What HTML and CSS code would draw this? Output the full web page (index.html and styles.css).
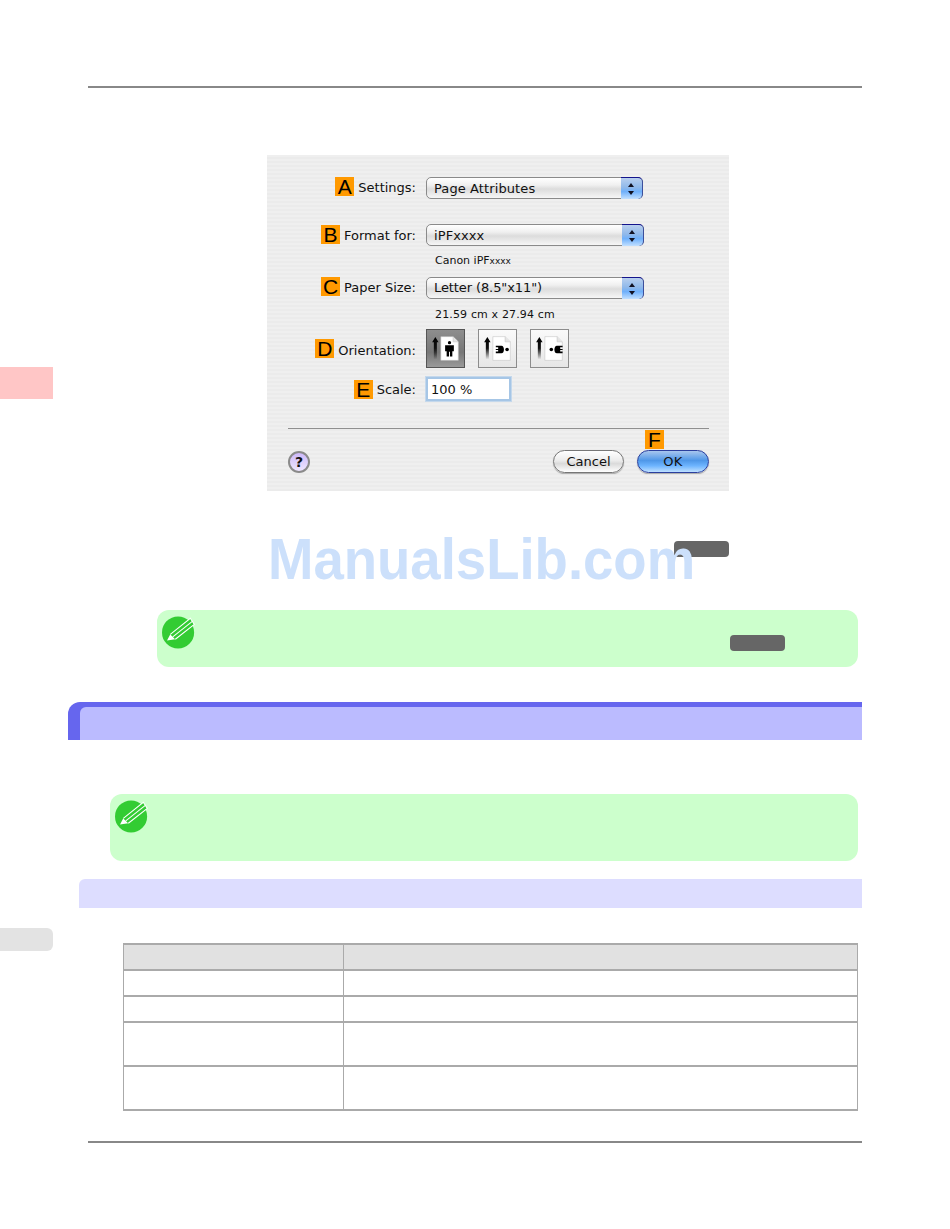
FILE: index.html
```html
<!DOCTYPE html>
<html lang="en">
<head>
  <meta charset="UTF-8">
  <title>Page Attributes</title>
  <link rel="stylesheet" href="styles.css">
</head>
<body>
  <div id="page">
    <!-- Side tabs -->
    <div id="sideTabs">
      <div class="tab tab-pink"></div>
      <div class="tab tab-grey"></div>
    </div>

    <div id="content">
      <div class="rule rule-top"></div>

      <!-- Page Attributes dialog -->
      <div id="dialog">
        <div class="row row-settings">
          <div class="label"><span class="badge">A</span>Settings:</div>
          <div class="select select-short"><span class="select-text">Page Attributes</span><span class="stepper"><i class="up"></i><i class="down"></i></span></div>
        </div>
        <div class="row row-format">
          <div class="label"><span class="badge">B</span>Format for:</div>
          <div class="select"><span class="select-text">iPFxxxx</span><span class="stepper"><i class="up"></i><i class="down"></i></span></div>
        </div>
        <p class="sub sub-printer">Canon iPF<span class="small-x">xxxx</span></p>
        <div class="row row-paper">
          <div class="label"><span class="badge">C</span>Paper Size:</div>
          <div class="select select-tight"><span class="select-text">Letter (8.5"x11")</span><span class="stepper"><i class="up"></i><i class="down"></i></span></div>
        </div>
        <p class="sub sub-paper">21.59 cm x 27.94 cm</p>
        <div class="row row-orientation">
          <div class="label"><span class="badge">D</span>Orientation:</div>
          <div class="orient-group">
            <svg class="orient orient-on" viewBox="0 0 39 39">
              <defs>
                <linearGradient id="arrowFade" x1="0" y1="0" x2="0" y2="1">
                  <stop offset="0" stop-color="#000"/>
                  <stop offset="0.5" stop-color="#111"/>
                  <stop offset="1" stop-color="#000" stop-opacity="0"/>
                </linearGradient>
                <g id="sheet">
                  <path d="M8.8 7.5 L5.4 13 H7.2 V31 H10.4 V13 H12.2 Z" fill="url(#arrowFade)"/>
                  <path d="M14.6 7 H27.5 L33 12.5 V32 H14.6 Z" fill="#fff" stroke="#c4c4c4" stroke-width=".6"/>
                  <path d="M27.5 7 V12.5 H33" fill="#e4e4e4" stroke="#c4c4c4" stroke-width=".6"/>
                </g>
                <g id="personSide">
                  <path d="M-4.5 -4 H1.5 C5 -4 5 4 1.5 4 H-4.5 V2.2 H-2 V.6 H-4.5 V-.6 H-2 V-2.2 H-4.5 Z"/>
                  <circle cx="7.4" cy="0" r="1.9"/>
                </g>
              </defs>
              <use href="#sheet"/>
              <g transform="translate(23.7 20)">
                <circle cx="0" cy="-6.6" r="1.7"/>
                <path d="M-4.6 -4 H4.6 V2.4 H3 V8 H.5 V2.8 H-.5 V8 H-3 V2.4 H-4.6 Z"/>
              </g>
            </svg>
            <svg class="orient" viewBox="0 0 39 39">
              <use href="#sheet"/>
              <use href="#personSide" transform="translate(22.2 20.5)"/>
            </svg>
            <svg class="orient" viewBox="0 0 39 39">
              <use href="#sheet"/>
              <use href="#personSide" transform="translate(28.8 20.5) scale(-1 1)"/>
            </svg>
          </div>
        </div>
        <div class="row row-scale">
          <div class="label"><span class="badge">E</span>Scale:</div>
          <div class="scale-input">100 %</div>
        </div>
        <div class="dialog-sep"></div>
        <div class="dialog-foot">
          <div class="help">?</div>
          <div class="btn btn-cancel">Cancel</div>
          <div class="btn btn-ok"><span class="badge badge-f">F</span>OK</div>
        </div>
      </div>

      <div class="pill pill-ref"></div>

      <!-- Note 1 -->
      <div class="note note-first">
        <svg class="note-icon" viewBox="0 0 36 36">
          <use href="#noteGlyph"/>
        </svg>
        <div class="pill pill-note"></div>
      </div>

      <div class="heading-main"><div class="heading-main-inner"></div></div>

      <!-- Note 2 -->
      <div class="note note-second">
        <svg class="note-icon" viewBox="0 0 36 36">
          <defs>
            <g id="noteGlyph">
              <circle cx="17" cy="18.5" r="17" fill="#33cc33"/>
              <path d="M5.3 27 L8.8 20.5 L14.1 25.7 Z" fill="#fff"/>
              <path d="M8.8 20.5 L30 3.5 L34.2 9.9 L14.1 25.7" fill="#33cc33" stroke="#fff" stroke-width="1.1"/>
              <path d="M11.4 23.1 L32.1 6.7" stroke="#fff" stroke-width="1.1" fill="none"/>
            </g>
          </defs>
          <use href="#noteGlyph"/>
        </svg>
      </div>

      <div class="heading-sub"></div>

      <table id="specTable">
        <tr class="head"><td class="col-a"></td><td></td></tr>
        <tr class="single"><td></td><td></td></tr>
        <tr class="single"><td></td><td></td></tr>
        <tr class="double"><td></td><td></td></tr>
        <tr class="double"><td></td><td></td></tr>
      </table>

      <div class="rule rule-bottom"></div>
    </div>

    <div id="watermark">ManualsLib.com</div>
  </div>
</body>
</html>
```

FILE: styles.css
```css
body {
  margin: 0;
  background-color: white;
  font-family: "DejaVu Sans", sans-serif;
  color: #111;
}
#page {
  position: relative;
  display: flex;
  width: 950px;
  height: 1229px;
  overflow: hidden;
}

/* side tabs */
#sideTabs {
  width: 53px;
  flex-shrink: 0;
}
.tab-pink {
  margin-top: 367px;
  height: 32px;
  background: #ffc6c6;
}
.tab-grey {
  margin-top: 529px;
  height: 23px;
  background: #e3e3e3;
  border-radius: 0 6px 6px 0;
}

#content {
  flex: 1;
}
.rule {
  margin-left: 35px;
  width: 774px;
  height: 2px;
  background: #888;
}
.rule-top {
  margin-top: 86px;
}
.rule-bottom {
  margin-top: 30px;
}

/* dialog */
#dialog {
  box-sizing: border-box;
  margin: 67px 0 0 214px;
  width: 462px;
  height: 336px;
  padding-top: 22px;
  background: repeating-linear-gradient(#efefef 0 2px, #ebebeb 2px 4px);
  font-size: 13px;
}
.row {
  display: flex;
  align-items: center;
  height: 22px;
}
.row-format {
  margin-top: 25px;
}
.row-orientation {
  margin-top: 7px;
  height: 39px;
}
.row-scale {
  margin-top: 9px;
  height: 24px;
}
.label {
  display: flex;
  align-items: center;
  justify-content: flex-end;
  width: 149px;
  margin-right: 10px;
  white-space: nowrap;
}
.badge {
  display: inline-block;
  width: 19px;
  height: 19px;
  margin-right: 4px;
  background: #ff9900;
  color: black;
  font-family: "Liberation Sans", sans-serif;
  font-size: 21px;
  line-height: 20px;
  text-align: center;
}
.row-settings .label,
.row-paper .label {
  margin-bottom: 2px;
}
.row-settings .badge,
.row-paper .badge,
.row-format .badge {
  margin-bottom: 2px;
}
.row-orientation .label {
  margin-top: 4px;
}
.row-orientation .badge {
  margin-bottom: 4px;
}
.select {
  box-sizing: border-box;
  position: relative;
  width: 218px;
  height: 22px;
  border: 1px solid #8a8a8a;
  border-radius: 5px;
  background: linear-gradient(#fff 0%, #f0f0f0 35%, #dcdcdc 55%, #f6f6f6 100%);
  line-height: 22px;
  letter-spacing: .1px;
}
.select-short {
  width: 217px;
}
.select-tight {
  letter-spacing: -.1px;
  line-height: 20px;
}
.select-text {
  padding-left: 7px;
}
.stepper {
  position: absolute;
  top: -1px;
  right: -1px;
  bottom: -1px;
  width: 22px;
  border-radius: 0 5px 5px 0;
  border-top: 1px solid #14148c;
  border-right: 1px solid #3c4f9c;
  box-sizing: border-box;
  background: linear-gradient(#b8cfee 0%, #8fb8ea 45%, #6fb0fb 65%, #c2e0ff 100%);
}
.stepper i {
  position: absolute;
  left: 7px;
  border-left: 3px solid transparent;
  border-right: 3px solid transparent;
}
.stepper .up {
  top: 5px;
  border-bottom: 4px solid #112;
}
.stepper .down {
  top: 13px;
  border-top: 4px solid #112;
}
.sub {
  margin: 0 0 0 168px;
  font-size: 11px;
  line-height: 15px;
}
.small-x {
  font-size: 9px;
}
.sub-printer {
  margin-top: 7px;
  margin-bottom: 8px;
}
.sub-paper {
  margin-top: 8px;
  margin-bottom: 2px;
  letter-spacing: .15px;
}
.orient-group {
  display: flex;
  gap: 13px;
}
.orient {
  box-sizing: border-box;
  width: 39px;
  height: 39px;
  border: 1px solid #8c8c8c;
  background: linear-gradient(#fafafa, #e6e6e6);
}
.orient-on {
  border-color: #555;
  background: linear-gradient(#8e8e8e, #777 60%, #9a9a9a);
}
.scale-input {
  box-sizing: border-box;
  width: 85px;
  height: 24px;
  padding-left: 3px;
  background: white;
  border: 2px solid #a6c6e6;
  outline: 1px solid #c4d8ec;
  font-size: 13px;
  line-height: 21px;
}
.dialog-sep {
  margin: 27px 0 0 21px;
  width: 421px;
  height: 1px;
  background: #8f8f8f;
}
.dialog-foot {
  display: flex;
  align-items: center;
  margin: 21px 20px 0 21px;
}
.help {
  box-sizing: border-box;
  width: 22px;
  height: 22px;
  margin-right: auto;
  border: 2px solid #8a8a8a;
  border-radius: 50%;
  background: linear-gradient(#cdb8fa, #eee6ff);
  font-weight: bold;
  font-size: 14px;
  line-height: 18px;
  text-align: center;
}
.btn {
  box-sizing: border-box;
  position: relative;
  height: 23px;
  border-radius: 12px;
  line-height: 21px;
  text-align: center;
  box-shadow: 0 1px 1px #aaa;
}
.btn-cancel {
  width: 71px;
  margin-right: 13px;
  border: 1px solid #777;
  background: linear-gradient(#fff 0%, #ececec 45%, #dadada 60%, #fff 100%);
}
.btn-ok {
  width: 72px;
  border: 1px solid #2b3f9e;
  background: linear-gradient(#a8c6ee 0%, #4f97e8 45%, #6db4ff 70%, #bfe0ff 100%);
  letter-spacing: .4px;
}
.badge-f {
  position: absolute;
  left: 7px;
  top: -21px;
  margin: 0;
}

/* reference pills */
.pill {
  width: 55px;
  height: 16px;
  background: #666;
  border-radius: 4px;
}
.pill-ref {
  margin: 50px 0 0 621px;
}
.pill-note {
  margin: 20px 0 0 534px;
}

/* notes */
.note {
  box-sizing: border-box;
  display: flex;
  align-items: flex-start;
  padding: 5px;
  background: #ccffcc;
  border-radius: 12px;
}
.note-icon {
  width: 34px;
  height: 34px;
  flex-shrink: 0;
}
.note-first {
  margin: 53px 0 0 104px;
  width: 701px;
  height: 57px;
}
.note-second {
  margin: 54px 0 0 57px;
  width: 748px;
  height: 67px;
}

/* headings */
.heading-main {
  box-sizing: border-box;
  margin: 35px 0 0 15px;
  width: 794px;
  height: 38px;
  padding: 5px 0 0 12px;
  background: #6666ee;
  border-radius: 12px 0 0 0;
}
.heading-main-inner {
  height: 100%;
  background: #bbbbff;
  border-radius: 6px 0 0 0;
}
.heading-sub {
  margin: 18px 0 0 26px;
  width: 783px;
  height: 29px;
  background: #ddddff;
  border-radius: 6px 0 0 0;
}

/* table */
#specTable {
  margin: 35px 0 0 70px;
  width: 735px;
  border-collapse: collapse;
}
#specTable td {
  padding: 0;
  border: 1px solid #aaa;
  border-top-width: 2px;
  border-bottom-width: 2px;
}
#specTable .col-a {
  width: 219px;
}
#specTable .head td {
  height: 24px;
  background: #e1e1e1;
}
#specTable .single td {
  height: 24px;
}
#specTable .double td {
  height: 42px;
}

#watermark {
  position: absolute;
  left: 268px;
  top: 527px;
  font-family: "Liberation Sans", sans-serif;
  font-weight: bold;
  font-size: 58px;
  line-height: 64px;
  color: #cce0fb;
  white-space: nowrap;
  transform: scaleX(.94);
  transform-origin: left;
}
```
